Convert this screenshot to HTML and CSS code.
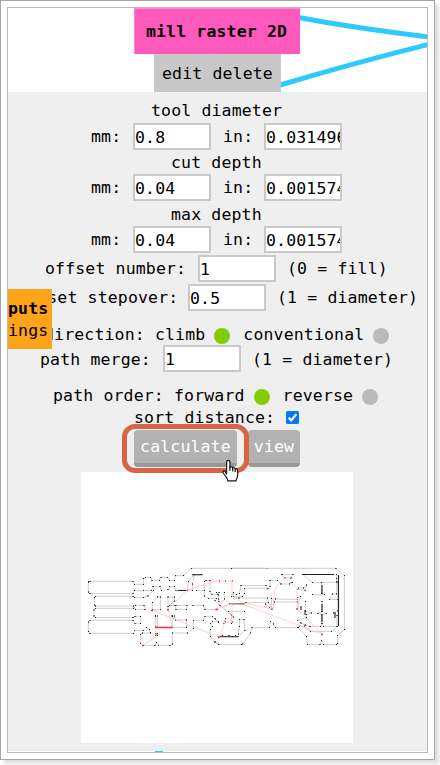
FILE: index.html
```html
<!DOCTYPE html>
<html lang="en">
<head>
<meta charset="utf-8">
<title>mill raster 2D</title>
<link rel="stylesheet" href="styles.css">
</head>
<body>
<div class="frame">
<main class="workspace">
  <svg class="wires" width="419" height="84" viewBox="8 8 419 84"><path d="M290 16Q360 29 430 37M277 86Q350 64 430 44"/></svg>
  <header class="title">mill raster 2D</header>
  <nav class="actions"><span>edit delete</span></nav>
  <section class="panel">
    <div class="row tool">tool diameter</div>
    <div class="row units"><label>mm:</label><input value="0.8"><label>in:</label><input value="0.031496"></div>
    <div class="row depth">cut depth</div>
    <div class="row units second"><label>mm:</label><input value="0.04"><label>in:</label><input value="0.001574"></div>
    <div class="row depth max">max depth</div>
    <div class="row units third"><label>mm:</label><input value="0.04"><label>in:</label><input value="0.001574"></div>
    <div class="row offset"><label>offset number:</label><input value="1"><span>(0 = fill)</span></div>
    <div class="row stepover"><label>offset stepover:</label><input value="0.5"><span>(1 = diameter)</span></div>
    <div class="row direction"><span>direction: climb</span><i class="dot on"></i><span>conventional</span><i class="dot"></i></div>
    <div class="row merge"><label>path merge:</label><input value="1"><span>(1 = diameter)</span></div>
    <div class="row order"><span>path order: forward</span><i class="dot on"></i><span>reverse</span><i class="dot"></i></div>
    <div class="row sort"><span>sort distance:</span><svg class="check" width="13" height="13" viewBox="0 0 13 13"><rect width="13" height="13" rx="1.5"/><path d="M2.7 6.8L5.2 9.4L10.4 3.1"/></svg></div>
    <div class="buttons"><button>calculate</button><button class="view">view</button></div>
    <svg class="preview" width="272" height="271" viewBox="81 472 272 271">
      <defs><marker id="node" markerUnits="userSpaceOnUse" markerWidth="4" markerHeight="4" refX="2" refY="2"><rect width="4" height="4" fill="#222"/></marker></defs>
      <g class="traces" transform="translate(80 560) scale(.33333)">
        <path d="M220 92L204 108L190 113H163L159 109H47L43 113V135L47 138H160L166 148H195L192 136H166L160 145H46L42 150V168L47 173H159L165 169H181V190H165L159 181H30L25 186V215L30 220H160L164 211H190L199 202L208 209L211 217"/>
        <path d="M25 66V96L30 101H159L163 92H190L215 91L219 80H240L244 91M264 89L269 80H283L288 91H320L326 64L342 44H366M25 66L30 64H159L163 73H190L191 56L197 52H211L216 61H238L243 52H263L269 61H283L287 47H311L334 25H562"/>
        <path d="M217 149V128L233 111H242V149H217M264 149V111H283V123L264 140M268 137L285 136L288 148H320L321 136H288M339 136H370L375 149H408"/>
        <path d="M320 91H338V72L343 44M350 91H373V65L378 61H390V95L396 104H412L417 97M373 91V108L385 115L410 116L417 125"/>
        <path d="M226 168H232V201H226ZM276 168H283L287 180H320V202H277V168M340 181H370L375 169H398L407 179M340 181V205L322 219H277V252L270 256H236L230 247L225 256H187L182 250V223L187 219H211M226 220H233V227H226ZM415 185H397L391 190L397 200L391 208V230L405 247L417 253"/>
      </g>
      <g class="traces" transform="translate(215 560) scale(.33333)">
        <path d="M50 25H363L388 46V208L368 227V250L364 254H326L320 242L315 254H278L274 229L248 203L253 198H268L286 214H350L368 199M250 203H181L176 192L166 184L164 203H111L106 219L83 252L79 254H10L0 244"/>
        <path d="M50 109L55 98L65 104L73 101L78 77H153L159 85H89V100L82 109H50L72 114H158L160 128H93L87 132H44M152 132L163 143L173 147L160 128M170 147V116L179 126H247V118L182 117M247 147L257 110L247 113M165 80V61L187 61L198 72H223L228 67H233M201 43H234L228 54H210L201 43M248 88L270 91L275 75L265 84H250M263 43L292 68H320V100L329 104H293M320 68L365 66V43M365 55V102H352L344 118H367"/>
        <path d="M272 125V153L289 159L274 163V173L247 181L258 189L271 195L285 199H316L320 191V165L309 160L321 155V125M321 155L335 160L321 165V190L326 199H366V166L355 159L369 153V66"/>
        <path d="M0 122L55 171L41 154H88M5 97L11 105V117M29 98V117L15 136M55 97V109M50 190V165M27 190L32 175M0 175L11 188M12 230L22 226L32 230L42 226L52 230L62 226L69 230L90 212L87 178H73V200L70 222"/>
      </g>
      <g class="dark"><path d="M303 574.5H334M338.5 575V626M229 604H243M220 636.8H238M178 590.5H186M301 606V610M322 585V594M322 604V611M322 616V622M305 610V615M335 612V618M192 574.8H202"/></g>
      <path class="travel" d="M143 645L156 637V627H172L168 609L187 590L219 580M217 581H232V596L244 603L273 609L275 588L285 578L297 588V609L322 634L245 605L230 604L215 609M152 610L219 637L225 622H232V604L216 609"/>
      <path class="hot" d="M155 627.5H173M321 634.5H323M297 608V610M187 590.5H188M168 609V611M151 610.5H153M156 634.5H157M142 645.5H144M218 637.5H220M219 581H220M225 581H226M232 581H233M225 622H226M232 622H233M216 609.5H218"/>
    </svg>
  </section>
</main>
</div>
<aside class="node"><b>puts</b><span>ings</span></aside>
<div class="highlight"></div>
<svg class="cursor" width="18" height="25" viewBox="0 0 18 25"><path d="M5.6 15.2V3.2C5.6.7 8.9.7 8.9 3.2V8.3C10.3 7.3 11.5 8 11.7 9C13 8.2 14 9 14.2 10C15.6 9.2 16.7 10.3 16.7 12V16C16.7 18.5 15.4 19.4 15.1 21.8H6.8C6.6 18.9 4 16.9 2.4 14.2C1.1 12.1 3.4 11 4.5 13Z"/><path d="M8.9 8V12M11.7 9V12.5M14.2 10V13"/></svg>
<i class="wire-end"></i>
</body>
</html>
```
FILE: styles.css
```css
* { box-sizing: border-box; }
body {
  margin: 0;
  width: 440px;
  height: 765px;
  overflow: hidden;
  background: #fff;
  color: #000;
  font: 16.5px/24px "DejaVu Sans Mono", monospace;
  letter-spacing: .15px;
}
.frame {
  width: 435px;
  height: 760px;
  padding: 6px;
  border: 1px solid #a5a5a5;
  box-shadow: 4px 4px 4px #ddd;
}
.workspace {
  position: relative;
  width: 421px;
  height: 746px;
  border: 1px solid #bababa;
  overflow: hidden;
}
.wires { position: absolute; left: 0; top: 0; }
.wires path { fill: none; stroke: #2ecaff; stroke-width: 5; }
.title {
  position: relative;
  width: 166px;
  height: 46px;
  margin-left: 126px;
  padding-right: 2px;
  border: 1px solid #ff8ccf;
  border-width: 1px 0 0 1px;
  background: #ff59bd;
  line-height: 46px;
  text-align: center;
  font-weight: bold;
}
.actions {
  position: relative;
  width: 127px;
  height: 38px;
  margin-left: 146px;
  background: #c8c8c8;
  line-height: 39px;
  text-align: center;
}
.panel {
  display: flex;
  flex-direction: column;
  height: 659px;
  padding-top: 6px;
  background: #efefef;
}
.row {
  display: flex;
  align-items: center;
  flex: none;
  height: 26px;
  white-space: pre;
}
.tool { padding-left: 143px; height: 25px; }
.depth { padding: 2px 0 0 163px; height: 24px; }
.max { height: 25px; }
.units { padding-left: 83px; height: 27px; }
.units label { width: 42px; }
.units input + label { width: 42px; margin-left: 12px; }
.units input + label + input { margin-left: -1px; }
input {
  flex: none;
  width: 78px;
  height: 27px;
  padding: 1px 0 0;
  border: 2px solid #c9c9c9;
  border-radius: 0;
  background: #fff;
  color: #000;
  font: inherit;
  letter-spacing: inherit;
}
.offset { height: 27px; margin-top: 2px; padding-left: 37px; }
.offset label { width: 153px; }
.offset span, .stepover span, .merge span { margin-left: 11px; }
.stepover { height: 27px; margin-top: 2px; padding-left: 9px; }
.stepover label { width: 171px; }
.direction { height: 24px; margin: 12px 0 -2px; padding-left: 36px; }
.merge { height: 27px; padding-left: 32px; }
.merge label { width: 123px; }
.merge label, .merge span { padding-top: 2px; }
.order { height: 24px; margin-top: 12px; padding-left: 45px; }
.sort { height: 20px; padding-left: 126px; }
.dot {
  width: 16px;
  height: 16px;
  margin: 2px 13px 0 9px;
  border-radius: 50%;
  background: #bababa;
}
.dot.on { background: #84cc00; }
.check { margin: -2px 0 0 11px; }
.check rect { fill: #0878f5; }
.check path { fill: none; stroke: #fff; stroke-width: 2; }
.buttons { display: flex; gap: 11px; flex: none; margin: 2px 0 5px 126px; }
button {
  width: 103px;
  height: 37px;
  padding: 0;
  border: 0;
  border-bottom: 4px solid #999;
  border-radius: 4px;
  background: #b2b2b2;
  color: #fff;
  font: inherit;
  letter-spacing: inherit;
}
.view { width: 52px; }
.preview { flex: none; display: block; margin-left: 73px; background: #fff; }
.traces path {
  fill: none;
  stroke: #bcbcbc;
  stroke-width: 2.2;
  marker-start: url(#node);
  marker-mid: url(#node);
  marker-end: url(#node);
}
.dark path { fill: none; stroke: #222; stroke-width: 1.1; }
.travel { fill: none; stroke: #ffc4c4; stroke-width: .8; }
.hot { fill: none; stroke: #e43d3d; stroke-width: 1.3; }
.node {
  position: absolute;
  left: 8px;
  top: 289px;
  width: 44px;
  height: 60px;
  padding-top: 9px;
  background: #ffa318;
  line-height: 22px;
}
.node b, .node span { display: block; }
.highlight {
  position: absolute;
  left: 122px;
  top: 424px;
  width: 127px;
  height: 49px;
  border: 5px solid #d96345;
  border-radius: 13px;
}
.cursor { position: absolute; left: 221px; top: 459px; }
.cursor path { fill: #fff; stroke: #181820; stroke-width: 1.2; }
.wire-end { position: absolute; left: 155px; top: 751px; width: 8px; height: 1px; background: #2ecaff; }
```
